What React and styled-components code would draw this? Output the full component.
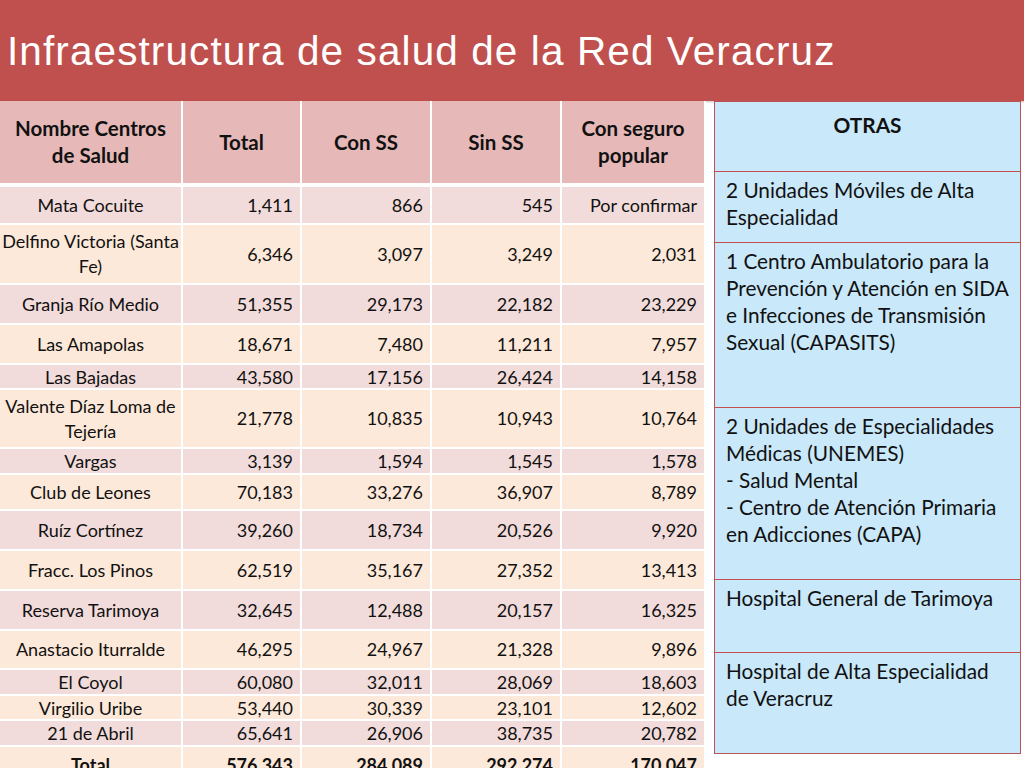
import styled, { createGlobalStyle } from "styled-components";

const GlobalStyle = createGlobalStyle`
  html, body {
    margin: 0;
    padding: 0;
    background: #ffffff;
  }
  body {
    width: 1024px;
    height: 768px;
    overflow: hidden;
    font-family: Lato, "Open Sans", sans-serif;
    color: #111;
  }
`;

const Slide = styled.div`
  width: 1024px;
  height: 768px;
  display: flex;
  flex-direction: column;
  overflow: hidden;
`;

const Header = styled.header`
  height: 101px;
  flex-shrink: 0;
  background: #c0504d;
  display: flex;
  align-items: center;
  padding-left: 7px;
  box-shadow: 2px 1px 2px rgba(0, 0, 0, 0.25);
`;

const Title = styled.h1`
  margin: 2px 0 0 0;
  font-family: "Liberation Sans Narrow", "Liberation Sans", Arial, sans-serif;
  font-weight: 400;
  font-size: 40.5px;
  color: #ffffff;
  letter-spacing: 1.1px;
`;

const Body = styled.div`
  display: flex;
  align-items: flex-start;
  gap: 8px;
`;

const Table = styled.table`
  width: 705px;
  border-collapse: collapse;
  table-layout: fixed;
  font-size: 18px;
`;

const HeadCell = styled.th`
  height: 82px;
  background: #e6b9b8;
  border: 2px solid #ffffff;
  border-top: none;
  border-bottom-width: 4px;
  font-weight: 700;
  font-size: 20.5px;
  line-height: 27px;
  text-align: center;
  padding: 0 6px;
  &:first-child { border-left: none; }
`;

const Row = styled.tr`
  height: ${(p) => p.$h}px;
  background: ${(p) => (p.$alt ? "#fde9d9" : "#f2dcdb")};
`;

const Cell = styled.td`
  border: 2px solid #ffffff;
  padding: 0 7px 0 2px;
  text-align: ${(p) => (p.$name ? "center" : "right")};
  font-weight: ${(p) => (p.$bold ? 700 : 400)};
  line-height: ${(p) => (p.$tight ? 20 : 25)}px;
  vertical-align: middle;
  &:first-child { border-left: none; padding: 0 1px; }
`;

const Panel = styled.div`
  width: 305px;
  display: flex;
  flex-direction: column;
  border: 1.5px solid #b9535a;
  background: #c9e8fa;
`;

const PanelItem = styled.div`
  height: ${(p) => p.$h}px;
  box-sizing: border-box;
  padding: ${(p) => (p.$head ? "9px 12px 0" : "4px 8px 0 11px")};
  border-top: ${(p) => (p.$head ? "none" : "1px solid #c0504d")};
  font-size: 20.8px;
  line-height: 27px;
  font-weight: ${(p) => (p.$head ? 700 : 400)};
  text-align: ${(p) => (p.$head ? "center" : "left")};
  white-space: pre-line;
`;

const rows = [
  ["Mata Cocuite", "1,411", "866", "545", "Por confirmar", 39],
  ["Delfino Victoria (Santa Fe)", "6,346", "3,097", "3,249", "2,031", 60],
  ["Granja Río Medio", "51,355", "29,173", "22,182", "23,229", 40],
  ["Las Amapolas", "18,671", "7,480", "11,211", "7,957", 40],
  ["Las Bajadas", "43,580", "17,156", "26,424", "14,158", 25],
  ["Valente Díaz Loma de Tejería", "21,778", "10,835", "10,943", "10,764", 59],
  ["Vargas", "3,139", "1,594", "1,545", "1,578", 26],
  ["Club de Leones", "70,183", "33,276", "36,907", "8,789", 36],
  ["Ruíz Cortínez", "39,260", "18,734", "20,526", "9,920", 40],
  ["Fracc. Los Pinos", "62,519", "35,167", "27,352", "13,413", 40],
  ["Reserva Tarimoya", "32,645", "12,488", "20,157", "16,325", 40],
  ["Anastacio Iturralde", "46,295", "24,967", "21,328", "9,896", 39],
  ["El Coyol", "60,080", "32,011", "28,069", "18,603", 26],
  ["Virgilio Uribe", "53,440", "30,339", "23,101", "12,602", 25],
  ["21 de Abril", "65,641", "26,906", "38,735", "20,782", 26],
];

const otras = [
  ["2 Unidades Móviles de Alta Especialidad", 71],
  ["1 Centro Ambulatorio para la Prevención y Atención en SIDA e Infecciones de Transmisión Sexual (CAPASITS)", 165],
  ["2 Unidades de Especialidades Médicas (UNEMES)\n- Salud Mental\n- Centro de Atención Primaria en Adicciones (CAPA)", 172],
  ["Hospital General de Tarimoya", 73],
  ["Hospital de Alta Especialidad de Veracruz", 101],
];

export default function App() {
  return (
    <Slide>
      <GlobalStyle />
      <Header>
        <Title>Infraestructura de salud de la Red Veracruz</Title>
      </Header>
      <Body>
        <Table>
          <colgroup>
            <col style={{ width: 182 }} />
            <col style={{ width: 119 }} />
            <col style={{ width: 130 }} />
            <col style={{ width: 130 }} />
            <col style={{ width: 144 }} />
          </colgroup>
          <thead>
            <tr>
              <HeadCell>Nombre Centros de Salud</HeadCell>
              <HeadCell>Total</HeadCell>
              <HeadCell>Con SS</HeadCell>
              <HeadCell>Sin SS</HeadCell>
              <HeadCell>Con seguro popular</HeadCell>
            </tr>
          </thead>
          <tbody>
            {rows.map(([name, total, con, sin, pop, h], i) => {
              const tight = h < 30;
              return (
                <Row key={name} $h={h} $alt={i % 2 === 1}>
                  <Cell $name $tight={tight}>{name}</Cell>
                  <Cell $tight={tight}>{total}</Cell>
                  <Cell $tight={tight}>{con}</Cell>
                  <Cell $tight={tight}>{sin}</Cell>
                  <Cell $tight={tight}>{pop}</Cell>
                </Row>
              );
            })}
            <Row $h={38} $alt>
              <Cell $name $bold>Total</Cell>
              <Cell $bold>576,343</Cell>
              <Cell $bold>284,089</Cell>
              <Cell $bold>292,274</Cell>
              <Cell $bold>170,047</Cell>
            </Row>
          </tbody>
        </Table>
        <Panel>
          <PanelItem $head $h={69}>OTRAS</PanelItem>
          {otras.map(([text, h]) => (
            <PanelItem key={text} $h={h}>{text}</PanelItem>
          ))}
        </Panel>
      </Body>
    </Slide>
  );
}
